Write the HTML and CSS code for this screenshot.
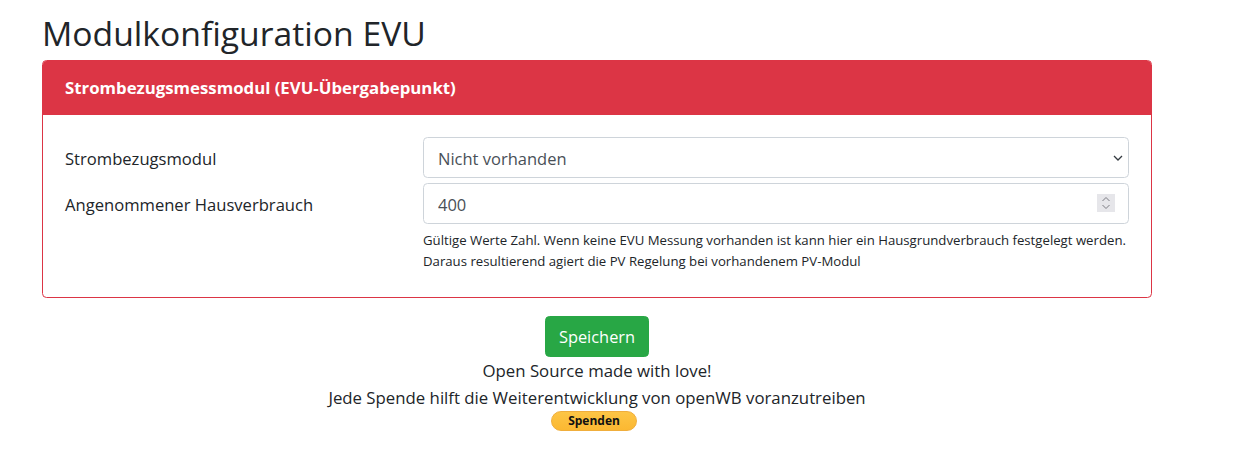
FILE: index.html
```html
<!DOCTYPE html>
<html lang="de">
<head>
    <meta charset="UTF-8">
    <meta name="viewport" content="width=device-width, initial-scale=1.0">
    <title>Modulkonfiguration EVU</title>
    <link rel="stylesheet" href="styles.css">
</head>
<body>
    <div class="page">
        <div class="container">
            <h1>Modulkonfiguration EVU</h1>

            <form id="evuForm">
                <div class="card">
                    <div class="card-header">Strombezugsmessmodul (EVU-Übergabepunkt)</div>
                    <div class="card-body">
                        <div class="form-row">
                            <label for="evuModul">Strombezugsmodul</label>
                            <div class="form-field">
                                <select id="evuModul" name="evuModul" class="form-control">
                                    <option>Nicht vorhanden</option>
                                </select>
                                <svg class="select-arrow" width="12" height="8" viewBox="0 0 12 8">
                                    <path d="M2 2 6 6l4-4" fill="none" stroke="#343a40" stroke-width="1.3"/>
                                </svg>
                            </div>
                        </div>
                        <div class="form-row">
                            <label for="hausVerbrauch">Angenommener Hausverbrauch</label>
                            <div class="form-field">
                                <input type="number" id="hausVerbrauch" name="hausVerbrauch" class="form-control" value="400">
                                <svg class="spinner" width="18" height="18" viewBox="0 0 18 18">
                                    <rect width="18" height="18" fill="#e6e6ea"/>
                                    <path d="M5.5 7 9 3.5 12.5 7M5.5 11 9 14.5 12.5 11" fill="none" stroke="#7c7c83" stroke-width="1"/>
                                </svg>
                                <small class="help-text">Gültige Werte Zahl. Wenn keine EVU Messung vorhanden ist kann hier ein Hausgrundverbrauch festgelegt werden. Daraus resultierend agiert die PV Regelung bei vorhandenem PV-Modul</small>
                            </div>
                        </div>
                    </div>
                </div>

                <div class="actions">
                    <button type="submit" class="btn-save">Speichern</button>
                </div>
            </form>

            <div class="footer-text">
                <div class="footer-line">Open Source made with love!</div>
                <div>Jede Spende hilft die Weiterentwicklung von openWB voranzutreiben</div>
                <a href="#" class="btn-donate">Spenden</a>
            </div>
        </div>
    </div>
</body>
</html>
```

FILE: styles.css
```css
body {
    margin: 0;
    background-color: #fff;
    color: #212529;
    font-family: "Open Sans", sans-serif;
    font-size: 16.8px;
    line-height: 27px;
}
.page {
    width: 1194px;
}
.container {
    width: 1110px;
    margin: 0 auto;
}
h1 {
    margin: 0;
    padding-top: 11px;
    height: 60px;
    box-sizing: border-box;
    font-size: 33.7px;
    font-weight: 400;
    line-height: 44px;
}
.card {
    border: 1px solid #dc3545;
    border-radius: 4.5px;
    overflow: hidden;
}
.card-header {
    background-color: #dc3545;
    color: #fff;
    padding: 13px 22px 14px;
    font-weight: 700;
}
.card-body {
    padding: 22px 22px 25px;
}
.form-row {
    display: grid;
    grid-template-columns: 358px 706px;
    margin-bottom: 5px;
}
.form-row:last-child {
    margin-bottom: 0;
}
.form-row label {
    padding-top: 8px;
    font-size: 16.6px;
}
.form-field {
    position: relative;
}
.form-control {
    display: block;
    width: 100%;
    height: 41px;
    box-sizing: border-box;
    padding: 7px 14px 5px;
    border: 1px solid #ced4da;
    border-radius: 4.5px;
    background-color: #fff;
    color: #495057;
    font-family: inherit;
    font-size: 16.5px;
    line-height: 27px;
    appearance: none;
    -moz-appearance: textfield;
}
input[type="number"]::-webkit-inner-spin-button {
    -webkit-appearance: none;
}
.select-arrow {
    position: absolute;
    top: 17px;
    right: 5px;
}
.spinner {
    position: absolute;
    top: 11px;
    right: 14px;
}
.help-text {
    display: block;
    margin-top: 6px;
    font-size: 13.2px;
    line-height: 21px;
}
.actions {
    margin-top: 18px;
    text-align: center;
}
.btn-save {
    width: 104px;
    height: 41px;
    border: 1px solid #28a745;
    border-radius: 4.5px;
    background-color: #28a745;
    color: #fff;
    font-family: inherit;
    font-size: 16.4px;
    line-height: 27px;
    cursor: pointer;
}
.footer-text {
    margin-top: 1px;
    text-align: center;
}
.footer-line {
    line-height: 26px;
}
.btn-donate {
    display: block;
    width: 86px;
    height: 20px;
    margin: 0 0 0 calc(50% - 46px);
    box-sizing: border-box;
    border: 1px solid #f0ae3c;
    border-radius: 10px;
    background: linear-gradient(#fdc545, #fbb832);
    color: #111;
    font-size: 12px;
    font-weight: 700;
    line-height: 18px;
    text-decoration: none;
}
```
